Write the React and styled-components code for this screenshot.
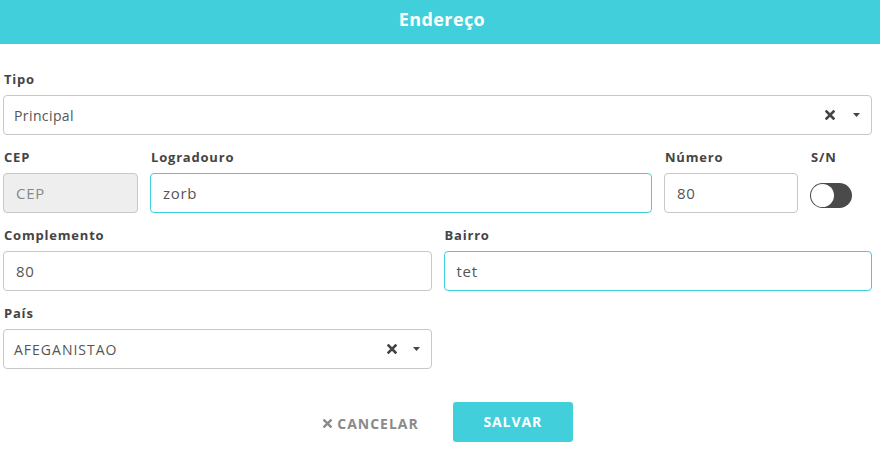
import styled, { createGlobalStyle } from "styled-components";

const GlobalStyle = createGlobalStyle`
  body {
    margin: 0;
    background: #fff;
    font-family: "Open Sans", "Liberation Sans", sans-serif;
  }
`;

const Modal = styled.div`
  width: 880px;
  height: 451px;
  display: flex;
  flex-direction: column;
  background: #fff;
`;

const Header = styled.header`
  height: 44px;
  display: flex;
  justify-content: center;
  align-items: center;
  background: #41cfdb;
  color: #fff;
  font-size: 18px;
  font-weight: 700;
  letter-spacing: 0.4px;
  padding: 0 0 6px 4px;
  box-sizing: border-box;
`;

const Body = styled.div`
  display: flex;
  flex-direction: column;
  gap: 13px;
  padding: 26px 8px 0 3px;
`;

const Row = styled.div`
  display: grid;
  grid-template-columns: ${(p) => p.$cols};
  column-gap: 12px;
`;

const Field = styled.div`
  display: flex;
  flex-direction: column;
`;

const Label = styled.label`
  font-size: 13px;
  font-weight: 700;
  color: #444;
  line-height: 18px;
  letter-spacing: 0.8px;
  margin-bottom: 7px;
  padding-left: 1px;
`;

const Input = styled.div`
  height: 40px;
  box-sizing: border-box;
  border: 1px solid ${(p) => (p.$focus ? "#41cfdb" : "#c8c8c8")};
  border-radius: 4px;
  background: ${(p) => (p.$disabled ? "#eeeeee" : "#fff")};
  display: flex;
  align-items: center;
  padding: 0 12px;
  font-size: 15px;
  letter-spacing: 0.7px;
  color: ${(p) => (p.$disabled ? "#888" : "#555")};
`;

const SelectBox = styled(Input)`
  padding: 0 11px 0 10px;
  font-size: 14px;
  letter-spacing: ${(p) => (p.$caps ? "1px" : "0.4px")};
  justify-content: space-between;
`;

const SelectIcons = styled.div`
  display: flex;
  align-items: center;
  gap: ${(p) => (p.$wide ? "18px" : "16px")};
  color: #444;
`;

const Toggle = styled.div`
  width: 42px;
  height: 25px;
  margin-top: 10px;
  border-radius: 13px;
  background: #4a4a4a;
  position: relative;
  &::after {
    content: "";
    position: absolute;
    left: 1px;
    top: 1px;
    width: 23px;
    height: 23px;
    border-radius: 50%;
    background: #fff;
  }
`;

const Footer = styled.div`
  display: flex;
  justify-content: center;
  align-items: center;
  gap: 34px;
  margin-top: 33px;
  padding-left: 16px;
`;

const CancelButton = styled.button`
  border: none;
  background: none;
  display: flex;
  align-items: center;
  gap: 5px;
  font-family: inherit;
  font-size: 14px;
  font-weight: 700;
  letter-spacing: 1px;
  color: #8a8a8a;
  padding: 0;
  margin-top: 2px;
`;

const SaveButton = styled.button`
  width: 120px;
  height: 40px;
  border: none;
  border-radius: 3px;
  background: #41cfdb;
  color: #fff;
  font-family: inherit;
  font-size: 14px;
  font-weight: 700;
  letter-spacing: 0.9px;
  padding-bottom: 3px;
`;

const Cross = ({ size = 10, color = "currentColor" }) => (
  <svg width={size} height={size} viewBox="0 0 10 10">
    <path d="M1.5 1.5 L8.5 8.5 M8.5 1.5 L1.5 8.5" stroke={color} strokeWidth="2.6" strokeLinecap="square" />
  </svg>
);

const Caret = () => (
  <svg width="7" height="4" viewBox="0 0 7 4">
    <path d="M0 0 H7 L3.5 4 Z" fill="#444" />
  </svg>
);

const Select = ({ value, caps, wide }) => (
  <SelectBox $caps={caps}>
    <span>{value}</span>
    <SelectIcons $wide={wide}>
      <Cross size={10} />
      <Caret />
    </SelectIcons>
  </SelectBox>
);

export default function App() {
  return (
    <Modal>
      <GlobalStyle />
      <Header>Endereço</Header>
      <Body>
        <Field>
          <Label>Tipo</Label>
          <Select value="Principal" wide />
        </Field>
        <Row $cols="135px 1fr 134px 62px">
          <Field>
            <Label>CEP</Label>
            <Input $disabled>CEP</Input>
          </Field>
          <Field>
            <Label>Logradouro</Label>
            <Input $focus>zorb</Input>
          </Field>
          <Field>
            <Label>Número</Label>
            <Input>80</Input>
          </Field>
          <Field>
            <Label>S/N</Label>
            <Toggle />
          </Field>
        </Row>
        <Row $cols="1fr 1fr">
          <Field>
            <Label>Complemento</Label>
            <Input>80</Input>
          </Field>
          <Field>
            <Label>Bairro</Label>
            <Input $focus>tet</Input>
          </Field>
        </Row>
        <Row $cols="1fr 1fr">
          <Field>
            <Label>País</Label>
            <Select value="AFEGANISTAO" caps />
          </Field>
        </Row>
      </Body>
      <Footer>
        <CancelButton>
          <Cross size={9} />
          CANCELAR
        </CancelButton>
        <SaveButton>SALVAR</SaveButton>
      </Footer>
    </Modal>
  );
}
